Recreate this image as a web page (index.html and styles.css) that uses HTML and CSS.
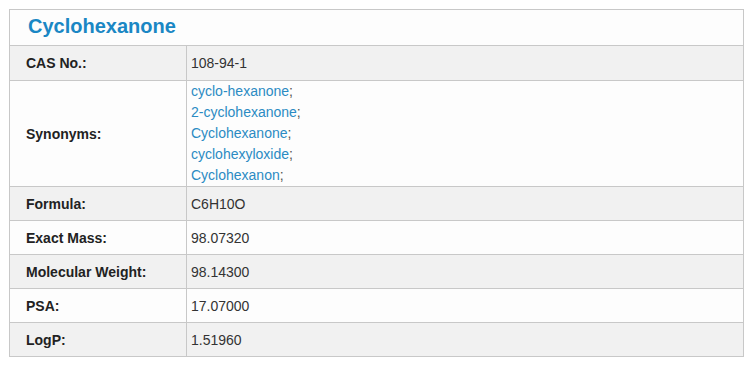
FILE: index.html
```html
<!DOCTYPE html>
<html>
<head>
<meta charset="utf-8">
<link rel="stylesheet" href="styles.css">
</head>
<body>
<div class="box">
  <h1 class="title">Cyclohexanone</h1>
  <table class="props">
    <tr class="alt"><th>CAS No.:</th><td>108-94-1</td></tr>
    <tr class="syn"><th>Synonyms:</th><td>
      <div><a>cyclo-hexanone</a>;</div>
      <div><a>2-cyclohexanone</a>;</div>
      <div><a>Cyclohexanone</a>;</div>
      <div><a>cyclohexyloxide</a>;</div>
      <div><a>Cyclohexanon</a>;</div>
    </td></tr>
    <tr class="alt"><th>Formula:</th><td>C6H10O</td></tr>
    <tr><th>Exact Mass:</th><td>98.07320</td></tr>
    <tr class="alt"><th>Molecular Weight:</th><td>98.14300</td></tr>
    <tr><th>PSA:</th><td>17.07000</td></tr>
    <tr class="alt"><th>LogP:</th><td>1.51960</td></tr>
  </table>
</div>
</body>
</html>
```
FILE: styles.css
```css
body {
  margin: 0;
  padding: 9px 0 0 9px;
  background: #fff;
  font-family: "Liberation Sans", Arial, sans-serif;
}
.box {
  width: 733px;
  border: 1px solid #c8c8c8;
  border-bottom: none;
  background: #fdfdfd;
}
.title {
  margin: 0;
  height: 35px;
  line-height: 33px;
  padding-left: 18px;
  font-size: 20px;
  font-weight: bold;
  color: #1a87c4;
  border-bottom: 1px solid #c8c8c8;
}
.props {
  width: 100%;
  border-collapse: collapse;
  font-size: 14px;
}
.props th, .props td {
  height: 33px;
  padding: 0;
  border-bottom: 1px solid #c8c8c8;
  vertical-align: middle;
}
.props th {
  width: 160px;
  text-align: left;
  font-weight: bold;
  color: #222;
  padding-left: 16px;
  border-right: 1px solid #c8c8c8;
}
.props td {
  color: #333;
  padding-left: 4px;
}
.props tr.alt th, .props tr.alt td {
  background: #f1f1f1;
}
.props tr:first-child th, .props tr:first-child td {
  height: 34px;
}
.syn td {
  line-height: 21px;
  color: #555;
}
.syn a {
  color: #2b8bc3;
}
```
